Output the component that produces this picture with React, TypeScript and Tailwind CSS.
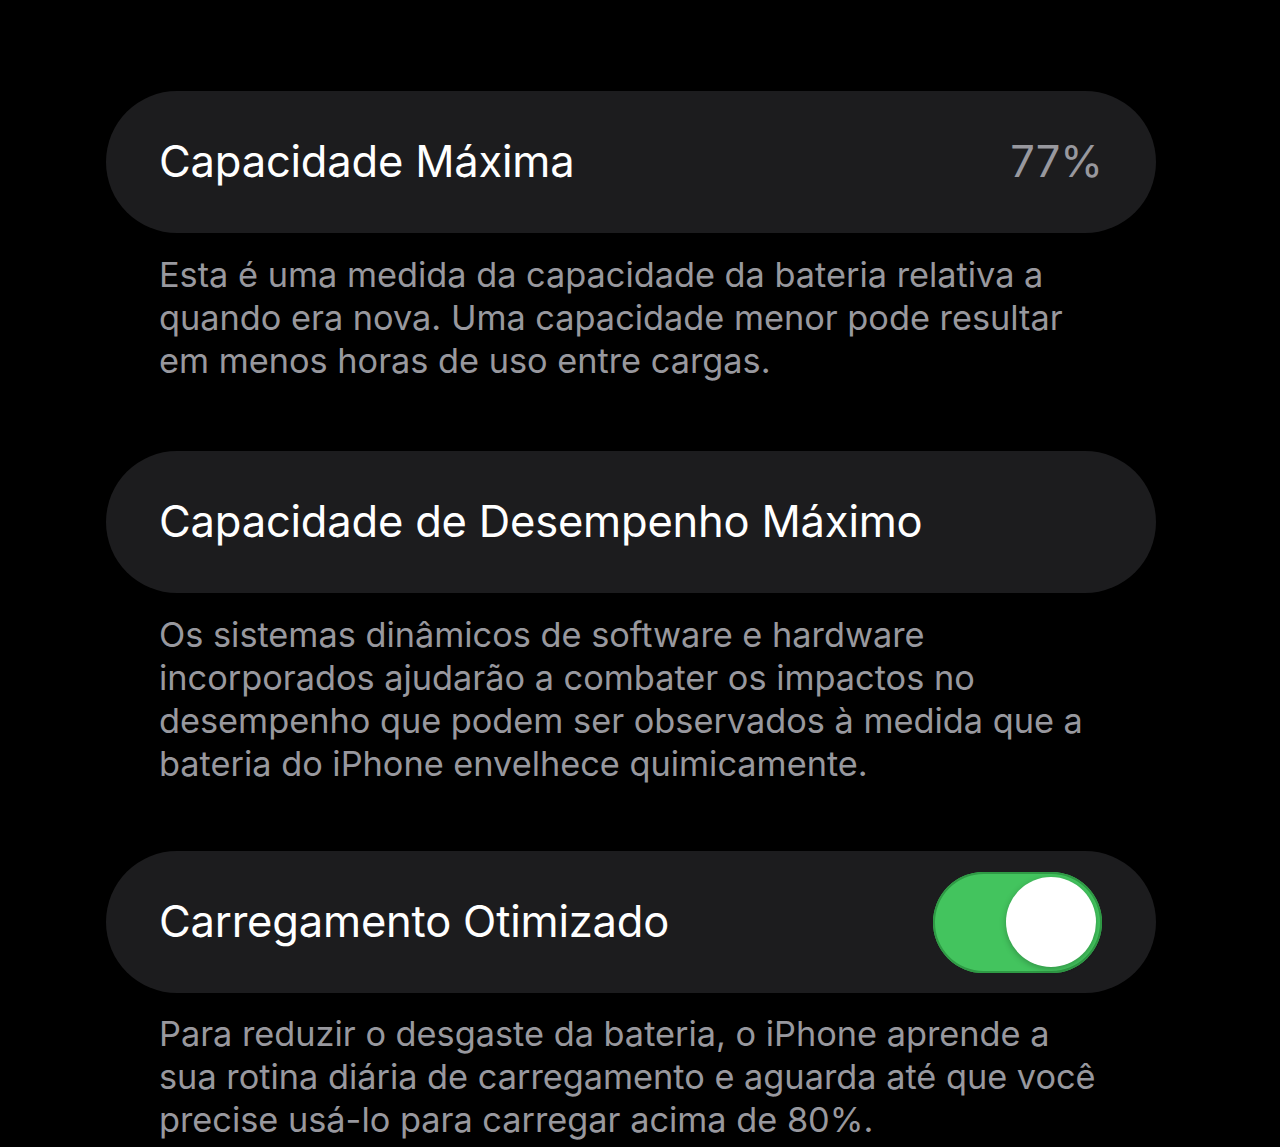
export default function App() {
  return (
    <div
      className="min-h-[1147px] w-[1280px] bg-black pt-[91px] pl-[106px]"
      style={{ fontFamily: 'Inter, "Noto Sans", sans-serif' }}
    >
      <div className="w-[1050px]">
        {/* Capacidade Máxima */}
        <div className="h-[142px] rounded-full bg-[#1c1c1e] pl-[53px] pr-[53px] flex items-center justify-between">
          <span className="text-[43.5px] text-white tracking-[-0.2px]">Capacidade Máxima</span>
          <span className="text-[43.5px] text-[#98989e]">77%</span>
        </div>
        <p className="pl-[53px] pt-[20px] pb-[69px] text-[34.3px] leading-[43px] text-[#98989e] whitespace-nowrap">
          Esta é uma medida da capacidade da bateria relativa a<br />
          quando era nova. Uma capacidade menor pode resultar<br />
          em menos horas de uso entre cargas.
        </p>

        {/* Capacidade de Desempenho Máximo */}
        <div className="h-[142px] rounded-full bg-[#1c1c1e] pl-[53px] flex items-center">
          <span className="text-[43.5px] text-white tracking-[-0.2px]">Capacidade de Desempenho Máximo</span>
        </div>
        <p className="pl-[53px] pt-[20px] pb-[66px] text-[34.3px] leading-[43px] text-[#98989e] whitespace-nowrap">
          Os sistemas dinâmicos de software e hardware<br />
          incorporados ajudarão a combater os impactos no<br />
          desempenho que podem ser observados à medida que a<br />
          bateria do iPhone envelhece quimicamente.
        </p>

        {/* Carregamento Otimizado */}
        <div className="h-[142px] rounded-full bg-[#1c1c1e] pl-[53px] pr-[54px] flex items-center justify-between">
          <span className="text-[43.5px] text-white tracking-[-0.2px]">Carregamento Otimizado</span>
          <div className="w-[169px] h-[101px] rounded-full bg-[#43c45e] flex items-center justify-end pr-[6px] shadow-[inset_0_0_0_2px_#2f9a45]">
            <div className="w-[90px] h-[90px] rounded-full bg-white shadow-[0_2px_6px_rgba(0,0,0,0.25)]" />
          </div>
        </div>
        <p className="pl-[53px] pt-[19px] text-[34.3px] leading-[43px] text-[#98989e] whitespace-nowrap">
          Para reduzir o desgaste da bateria, o iPhone aprende a<br />
          sua rotina diária de carregamento e aguarda até que você<br />
          precise usá-lo para carregar acima de 80%.
        </p>
      </div>
    </div>
  );
}
